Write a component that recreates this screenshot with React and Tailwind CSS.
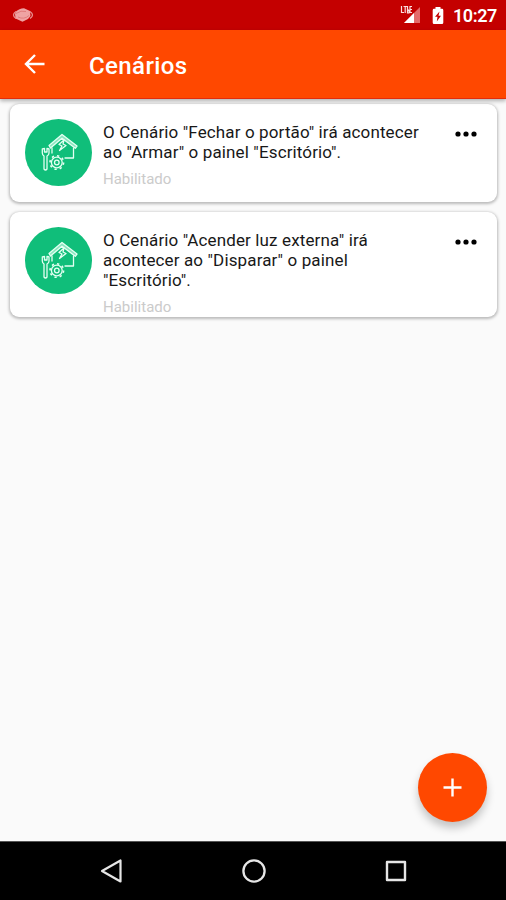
const roboto = "font-[Roboto,'Noto_Sans',sans-serif]";

function StatusBar() {
  return (
    <div className="flex h-[30px] shrink-0 items-center bg-[#c40000] pl-3 pr-[9px] text-white">
      <svg width="22" height="16" viewBox="0 0 22 16" fill="none">
        <path d="M4 4.500Q7 1.500 12 1.300L18 4L18.500 9L16 12L10.500 14.800L3.500 11.500L3 7Z" fill="#efa3a3" />
        <path d="M4 4.500Q-1 8 4 11.500M18 4.500Q23 8 18 11.500" stroke="#e88f8f" strokeWidth="1.300" />
        <path d="M4 6.500Q9 3 14 4.500M6 10Q12 13 17 8.500" stroke="#dc7474" strokeWidth=".8" />
      </svg>
      <div className="grow" />
      <svg width="22" height="20" viewBox="0 0 22 20" className="mr-[11px]">
        <path d="M21 2V18H5Z" fill="#e36a6a" />
        <path d="M15 8V18H5Z" fill="#fff" />
        <path d="M2.500 1V7.500H5M4.500 1.500H8M6.200 1.500V8M8.500 1V8H10Q10.500 6 9.500 4.500M13 1.500H11V7.500H13M11 4.500H13" fill="none" stroke="#fbdede" strokeWidth="1.200" />
      </svg>
      <svg width="12" height="19" viewBox="0 0 12 19" className="mr-[9px]">
        <path d="M3.500 1H8.500V2.800H10Q11.300 2.800 11.300 4.200V16.500Q11.300 18 10 18H2Q.7 18 .7 16.500V4.200Q.7 2.800 2 2.800H3.500Z" fill="#fff" />
        <path d="M7.500 5.500L3 10.800H5.500L4.800 15.500L9 9.800H6.500Z" fill="#c40000" />
      </svg>
      <span className="mt-[2px] text-[18px] font-semibold leading-5 tracking-[-0.4px]">10:27</span>
    </div>
  );
}

function AppBar() {
  return (
    <header className="z-10 flex h-[69px] shrink-0 items-center border-b border-[#e32d0d] bg-[#ff4800] pl-6 text-white shadow-[0_2px_4px_rgba(0,0,0,0.3)]">
      <svg width="22" height="20" viewBox="0 0 22 20" fill="none" stroke="#fff" strokeWidth="2.400">
        <path d="M20.500 10H2M11 1L2 10L11 19" />
      </svg>
      <h1 className="ml-[43px] mt-[3px] text-[24px] font-medium leading-7 tracking-[0.4px]">Cenários</h1>
    </header>
  );
}

function SceneIcon() {
  return (
    <svg width="67" height="67" viewBox="0 0 67 67" fill="none" className="shrink-0">
      <circle cx="33.500" cy="33.500" r="33.500" fill="#10be7a" />
      <g stroke="#e4fff2" strokeWidth="1.300" strokeLinejoin="round" strokeLinecap="round">
        <path d="M24 26.500L37 15.500L52 27L50.300 29.300L37 19.200L25.500 29Z" fill="#8be5bf" />
        <path d="M27 29V34M48.500 29V39H40" />
        <path d="M39 21L34 25.500L37 27L34.500 31.500L41 26.500L38 25Z" />
        <path d="M17.300 30V34Q17.300 36 19 37V50Q20.500 52 22 50V37Q24 36 24 34V30L22 29.500V33H19.500V29.500Z" />
        <circle cx="31.800" cy="43.500" r="5.400" />
        <circle cx="31.800" cy="43.500" r="2.300" />
        <circle cx="31.800" cy="43.500" r="6.800" strokeWidth="1.600" strokeDasharray="2.300 3.040" strokeLinecap="butt" />
      </g>
    </svg>
  );
}

function SceneCard({ lines, size }) {
  return (
    <article className={`flex overflow-hidden rounded-[9px] bg-white pl-[15px] pt-[15px] shadow-[0_1px_3px_1px_rgba(0,0,0,0.26)] ${size}`}>
      <SceneIcon />
      <div className="ml-[11px] mt-[3px] grow whitespace-nowrap">
        <p className="text-[17px] leading-5 tracking-[0.13px] text-[#181818]">
          {lines.map((line) => (
            <span key={line} className="block">{line}</span>
          ))}
        </p>
        <p className="mt-[7px] text-[15px] leading-5 text-[#cbcbcb]">Habilitado</p>
      </div>
      <svg width="22" height="6" viewBox="0 0 22 6" className="mr-5 mt-[12px] shrink-0">
        <circle cx="3" cy="3" r="2.600" />
        <circle cx="11" cy="3" r="2.600" />
        <circle cx="19" cy="3" r="2.600" />
      </svg>
    </article>
  );
}

function NavBar() {
  return (
    <nav className="flex h-[59px] shrink-0 items-center justify-between border-t border-[#555] bg-black pl-[100px] pr-[99px]">
      <svg width="22" height="24" viewBox="0 0 22 24" fill="none" stroke="#e6e6e6" strokeWidth="2.200" strokeLinejoin="round">
        <path d="M20.500 1.500V22.500L2 12Z" />
      </svg>
      <svg width="24" height="24" viewBox="0 0 24 24" fill="none" stroke="#e6e6e6" strokeWidth="2.300">
        <circle cx="12" cy="12" r="10.600" />
      </svg>
      <svg width="22" height="22" viewBox="0 0 22 22" fill="none" stroke="#e6e6e6" strokeWidth="2.400" strokeLinejoin="round">
        <rect x="2" y="2" width="18" height="18" />
      </svg>
    </nav>
  );
}

export default function App() {
  return (
    <div className={`flex h-[900px] w-[506px] flex-col overflow-hidden bg-[#fafafa] ${roboto}`}>
      <StatusBar />
      <AppBar />
      <main className="relative flex grow flex-col gap-[10px] px-[10px] pr-[9px] pt-[5px]">
        <SceneCard
          size="h-[98px]"
          lines={['O Cenário "Fechar o portão" irá acontecer', 'ao "Armar" o painel "Escritório".']}
        />
        <SceneCard
          size="h-[105px]"
          lines={['O Cenário "Acender luz externa" irá', 'acontecer ao "Disparar" o painel', '"Escritório".']}
        />
        <button className="absolute bottom-[19px] right-[19px] flex size-[69px] items-center justify-center rounded-full bg-[#ff4800] shadow-[0_6px_9px_rgba(0,0,0,0.22)]">
          <svg width="19" height="19" viewBox="0 0 19 19" stroke="#fff" strokeWidth="2.400">
            <path d="M9.500 .5V18.500M.5 9.500H18.500" />
          </svg>
        </button>
      </main>
      <NavBar />
    </div>
  );
}
